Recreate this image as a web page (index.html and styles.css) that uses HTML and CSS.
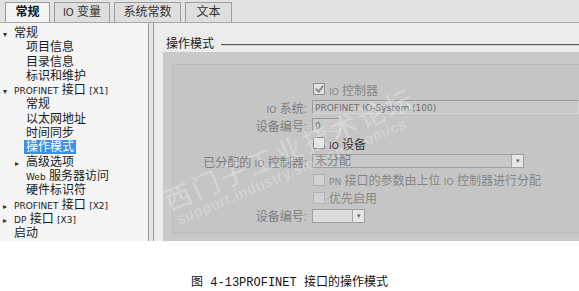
FILE: index.html
```html
<!DOCTYPE html>
<html lang="zh">
<head>
    <meta charset="UTF-8">
    <meta name="viewport" content="width=device-width, initial-scale=1.0">
    <title>操作模式</title>
    <link rel="stylesheet" href="styles.css">
</head>
<body>

<div class="window">
    <div class="tabs">
        <div class="tab active">常规</div>
        <div class="tab tab-io"><span class="en">IO</span> 变量</div>
        <div class="tab tab-const">系统常数</div>
        <div class="tab tab-text">文本</div>
    </div>

    <div class="main">
        <ul class="tree">
            <li class="lv0"><span class="arrow">&#9662;</span>常规</li>
            <li class="lv1">项目信息</li>
            <li class="lv1">目录信息</li>
            <li class="lv1">标识和维护</li>
            <li class="lv0"><span class="arrow">&#9662;</span><span class="en">PROFINET</span> 接口 <span class="en">[X1]</span></li>
            <li class="lv1">常规</li>
            <li class="lv1">以太网地址</li>
            <li class="lv1">时间同步</li>
            <li class="lv1"><span class="selected">操作模式</span></li>
            <li class="lv1 has-arrow"><span class="arrow">&#9656;</span>高级选项</li>
            <li class="lv1"><span class="en">Web</span> 服务器访问</li>
            <li class="lv1">硬件标识符</li>
            <li class="lv0"><span class="arrow">&#9656;</span><span class="en">PROFINET</span> 接口 <span class="en">[X2]</span></li>
            <li class="lv0"><span class="arrow">&#9656;</span><span class="en">DP</span> 接口 <span class="en">[X3]</span></li>
            <li class="lv0 plain">启动</li>
        </ul>

        <div class="splitter"></div>

        <div class="content">
            <div class="section-title">
                <span>操作模式</span>
                <div class="rule"></div>
            </div>

            <div class="panel">
                <div class="box">
                    <div class="form">
                        <div class="row">
                            <div class="label"></div>
                            <div class="check checked"></div>
                            <span class="text dim"><span class="en">IO</span> 控制器</span>
                        </div>
                        <div class="row">
                            <div class="label"><span class="en">IO</span> 系统:</div>
                            <div class="field wide"><span class="en">PROFINET IO-System (100)</span></div>
                        </div>
                        <div class="row">
                            <div class="label">设备编号:</div>
                            <div class="field small"><span class="en">0</span></div>
                        </div>
                        <div class="row">
                            <div class="label"></div>
                            <div class="check"></div>
                            <span class="text"><span class="en">IO</span> 设备</span>
                        </div>
                        <div class="row">
                            <div class="label">已分配的 <span class="en">IO</span> 控制器:</div>
                            <div class="select long">
                                <span class="value">未分配</span>
                                <span class="drop">&#9662;</span>
                            </div>
                        </div>
                        <div class="row">
                            <div class="label"></div>
                            <div class="check faint"></div>
                            <span class="text dim"><span class="en">PN</span> 接口的参数由上位 <span class="en">IO</span> 控制器进行分配</span>
                        </div>
                        <div class="row">
                            <div class="label"></div>
                            <div class="check faint"></div>
                            <span class="text dim">优先启用</span>
                        </div>
                        <div class="row">
                            <div class="label">设备编号:</div>
                            <div class="select short">
                                <span class="value"></span>
                                <span class="drop">&#9662;</span>
                            </div>
                        </div>
                    </div>
                </div>
            </div>

            <div class="watermark">
                <div class="wm-cn">西门子工业技术论坛</div>
                <div class="wm-en">support.industry.siemens.com/cs</div>
            </div>
        </div>
    </div>
</div>

<p class="caption">图 4-13PROFINET 接口的操作模式</p>

</body>
</html>
```

FILE: styles.css
```css
body {
    font-family: "Liberation Sans", "Noto Sans CJK SC", sans-serif;
    font-size: 12px;
    background-color: #fff;
    color: #222;
    margin: 0;
    padding: 0;
    width: 579px;
    height: 291px;
    overflow: hidden;
}
.en {
    font-family: "DejaVu Sans", sans-serif;
    font-size: 9px;
}
.window {
    height: 241px;
    background-color: #ececec;
    display: flex;
    flex-direction: column;
}
.tabs {
    height: 23px;
    box-sizing: border-box;
    padding: 2px 0 0 5px;
    display: flex;
    gap: 4px;
    background-color: #e2e2e2;
    border-bottom: 1px solid #a9a9a9;
}
.tab {
    width: 45px;
    box-sizing: border-box;
    text-align: center;
    line-height: 19px;
    border: 1px solid #9c9c9c;
    border-bottom: none;
    background-color: #dedede;
    color: #333;
    font-size: 12px;
    white-space: nowrap;
}
.tab-io { width: 56px; }
.tab-const { width: 67px; }
.tab-text { width: 47px; }
.tab .en { font-size: 10px; }
.tab.active {
    font-weight: bold;
    color: #111;
    background-color: #f4f4f4;
}
.main {
    flex: 1;
    display: flex;
    min-height: 0;
}
.tree {
    list-style: none;
    margin: 0;
    padding: 3px 0 0 0;
    width: 148px;
    background-color: #f5f5f5;
}
.tree li {
    height: 14.3px;
    line-height: 14.3px;
    white-space: nowrap;
    color: #1a1a1a;
}
.tree .lv0 { padding-left: 3px; }
.tree .lv0.plain { padding-left: 14px; }
.tree .lv1 { padding-left: 26px; }
.tree .lv1.has-arrow { padding-left: 15px; }
.arrow {
    display: inline-block;
    width: 11px;
    font-size: 8px;
    color: #333;
}
.selected {
    background-color: #3d8fe0;
    color: #fff;
    padding: 0 2px;
    margin-left: -2px;
}
.splitter {
    width: 4px;
    margin-right: 5px;
    border-left: 1px solid #9a9a9a;
    border-right: 1px solid #9a9a9a;
    background-color: #e6e6e6;
}
.content {
    flex: 1;
    position: relative;
    overflow: hidden;
    display: flex;
    flex-direction: column;
}
.section-title {
    display: flex;
    align-items: center;
    gap: 7px;
    height: 14px;
    margin: 12px 0 0 7px;
    color: #222;
}
.rule {
    flex: 1;
    margin-top: 6px;
    border-top: 1px solid #5a5a5a;
    border-bottom: 1px solid #cfcfcf;
}
.panel {
    flex: 1;
    margin: 3px 0 0 4px;
    padding: 12px 0 8px 9px;
    background-color: #c9c9c9;
    display: flex;
}
.box {
    flex: 1;
    background-color: #c5c5c5;
    border: 1px solid #bcbcbc;
    border-right: none;
}
.form {
    padding-top: 15px;
}
.row {
    display: flex;
    align-items: center;
    height: 18.1px;
}
.label {
    width: 134px;
    margin-right: 5px;
    text-align: right;
    color: #7c7c7c;
    white-space: nowrap;
}
.check {
    width: 10px;
    height: 10px;
    margin: 0 4px 0 1px;
    border: 1px solid #8f8f8f;
    background-color: #e2e2e2;
    position: relative;
}
.check.faint {
    border-color: #b4b4b4;
    background-color: #d2d2d2;
}
.check.checked::after {
    content: "";
    position: absolute;
    left: 3px;
    top: 0;
    width: 3px;
    height: 6px;
    border-right: 2px solid #8a8a8a;
    border-bottom: 2px solid #8a8a8a;
    transform: rotate(40deg);
}
.text {
    color: #2a2a2a;
    white-space: nowrap;
}
.text.dim {
    color: #858585;
}
.field {
    height: 14px;
    box-sizing: border-box;
    border: 1px solid #9a9a9a;
    border-right-color: #d6d6d6;
    border-bottom-color: #d6d6d6;
    background-color: #c9c9c9;
    color: #6f6f6f;
    padding-left: 2px;
    line-height: 12px;
    white-space: nowrap;
}
.field.wide { flex: 1; }
.field.small { width: 28px; }
.select {
    height: 14px;
    box-sizing: border-box;
    border: 1px solid #9f9f9f;
    background-color: #c8c8c8;
    display: flex;
    align-items: center;
}
.select.long { width: 212px; }
.select.short {
    width: 53px;
    background-color: #dadada;
}
.select .value {
    flex: 1;
    padding-left: 2px;
    color: #7a7a7a;
    line-height: 12px;
}
.drop {
    width: 11px;
    height: 12px;
    border-left: 1px solid #a5a5a5;
    background-color: #e6e6e6;
    color: #666;
    font-size: 7px;
    line-height: 12px;
    text-align: center;
}
.watermark {
    position: absolute;
    left: 18px;
    top: 160px;
    transform: rotate(-23deg);
    transform-origin: left bottom;
    color: rgba(255, 255, 255, 0.3);
    pointer-events: none;
    white-space: nowrap;
}
.wm-cn {
    font-family: "Noto Sans CJK SC", sans-serif;
    font-size: 27px;
    line-height: 32px;
    letter-spacing: 3px;
}
.wm-en {
    font-size: 15px;
    line-height: 16px;
    margin: -2px 0 0 4px;
    letter-spacing: 1px;
}
.caption {
    margin: 31px 0 0 0;
    text-align: center;
    font-family: "Liberation Mono", "Noto Sans CJK SC", monospace;
    font-size: 12px;
    color: #111;
}
```
